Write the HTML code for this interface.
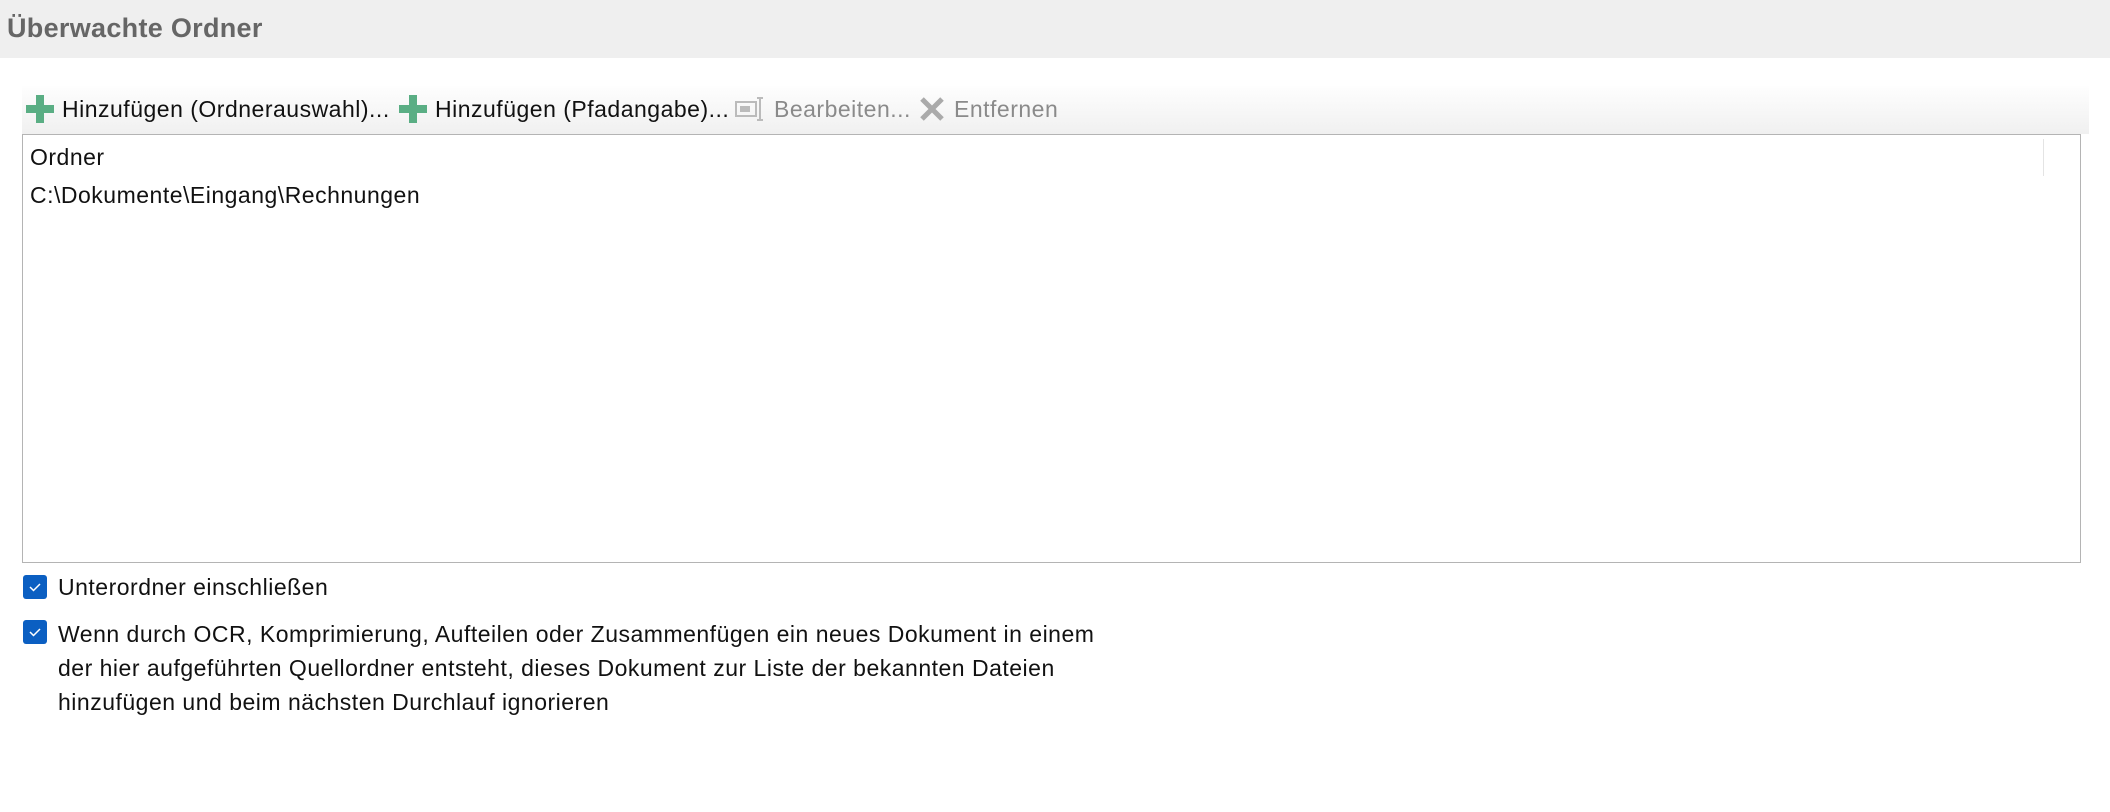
<!DOCTYPE html>
<html><head><meta charset="utf-8"><style>
body{margin:0;width:2110px;height:812px;background:#fff;position:relative;overflow:hidden;font-family:"Liberation Sans",sans-serif;color:#111;}
.a{position:absolute;white-space:nowrap;}
.hdr{left:0;top:0;width:2110px;height:58px;background:#efefef;}
.title{left:7px;top:13px;font-size:27px;font-weight:bold;color:#666;letter-spacing:0.3px;}
.tb{left:22px;top:86px;width:2067px;height:48px;background:linear-gradient(#fefefe,#f0f0f0);}
.list{left:22px;top:134px;width:2057px;height:427px;border:1px solid #b4b4b4;background:#fff;}
.t{font-size:23px;letter-spacing:0.5px;}
.dis{color:#8a8a8a;}
.cb{width:24px;height:24px;background:#0b5fc2;border-radius:3px;}
</style></head><body>
<div class="a hdr"></div>
<div class="a title">Überwachte Ordner</div>
<div class="a tb"></div>
<svg class="a" style="left:26px;top:95px" width="28" height="28"><path d="M10 0h8v10h10v8H18v10h-8V18H0v-8h10z" fill="#5aae84"/></svg>
<div class="a t" style="left:62px;top:96px">Hinzufügen (Ordnerauswahl)...</div>
<svg class="a" style="left:399px;top:95px" width="28" height="28"><path d="M10 0h8v10h10v8H18v10h-8V18H0v-8h10z" fill="#5aae84"/></svg>
<div class="a t" style="left:435px;top:96px">Hinzufügen (Pfadangabe)...</div>
<svg class="a" style="left:735px;top:96px" width="32" height="26"><rect x="1" y="6" width="20" height="14" fill="none" stroke="#bbb" stroke-width="2"/><rect x="5" y="10" width="10" height="6" fill="#bbb"/><path d="M25 2v22M22 2h6M22 24h6" stroke="#bbb" stroke-width="2" fill="none"/></svg>
<div class="a t dis" style="left:774px;top:96px">Bearbeiten...</div>
<svg class="a" style="left:919px;top:96px" width="26" height="26"><path d="M3 3L23 23M23 3L3 23" stroke="#aaa" stroke-width="5"/></svg>
<div class="a t dis" style="left:954px;top:96px">Entfernen</div>
<div class="a list"></div>
<div class="a" style="left:2043px;top:139px;width:1px;height:37px;background:#e4e4e4"></div>
<div class="a t" style="left:30px;top:144px">Ordner</div>
<div class="a t" style="left:30px;top:182px">C:\Dokumente\Eingang\Rechnungen</div>
<div class="a cb" style="left:23px;top:575px"><svg width="24" height="24"><path d="M7 12l3.5 3.5L17 9" stroke="#fff" stroke-width="1.5" fill="none"/></svg></div>
<div class="a t" style="left:58px;top:574px">Unterordner einschließen</div>
<div class="a cb" style="left:23px;top:620px"><svg width="24" height="24"><path d="M7 12l3.5 3.5L17 9" stroke="#fff" stroke-width="1.5" fill="none"/></svg></div>
<div class="a t" style="left:58px;top:617px;line-height:34px;white-space:nowrap">Wenn durch OCR, Komprimierung, Aufteilen oder Zusammenfügen ein neues Dokument in einem<br>der hier aufgeführten Quellordner entsteht, dieses Dokument zur Liste der bekannten Dateien<br>hinzufügen und beim nächsten Durchlauf ignorieren</div>
</body></html>
